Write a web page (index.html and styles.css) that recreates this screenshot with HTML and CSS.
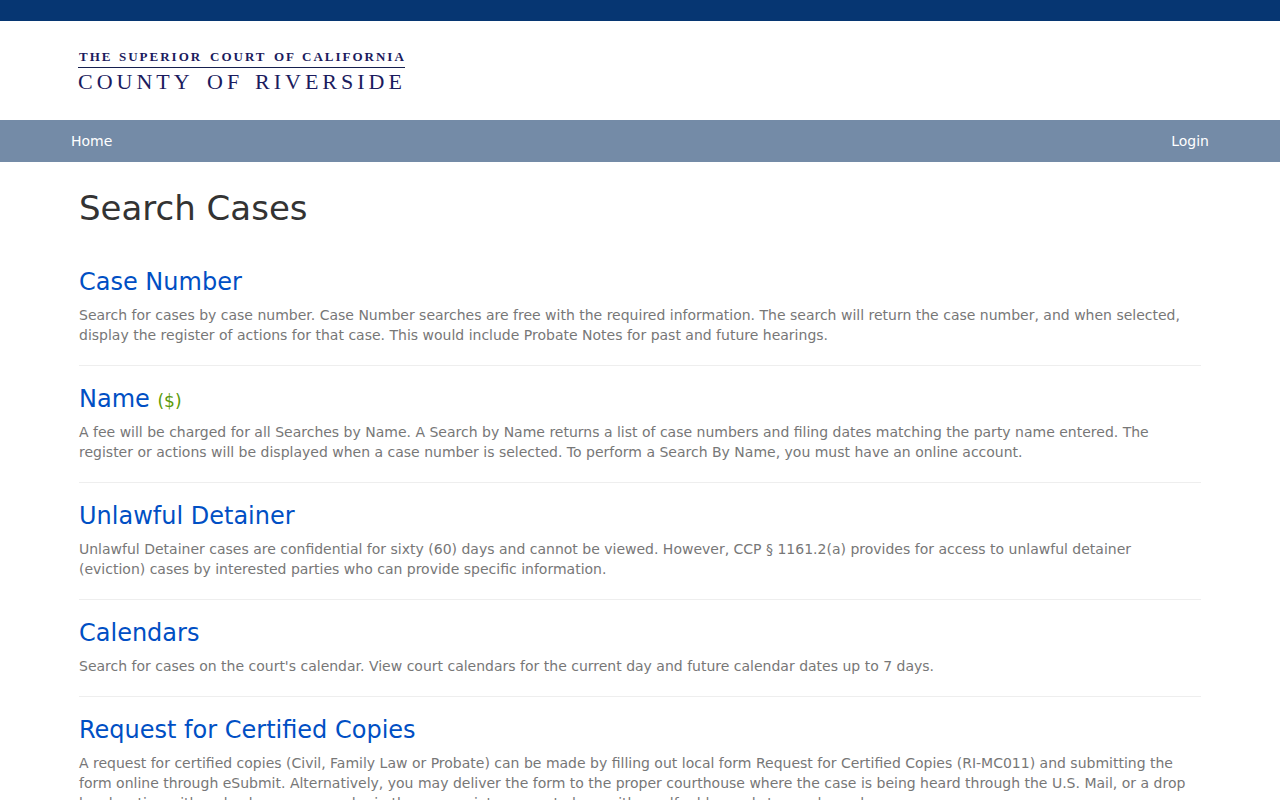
FILE: index.html
```html
<!DOCTYPE html>
<html lang="en">
<head>
    <meta charset="UTF-8">
    <title>Search Cases</title>
    <link rel="stylesheet" href="styles.css">
</head>
<body>
    <div class="topbar"></div>
    <header class="header">
        <a href="#" class="logo">
            <svg width="328" height="44" viewBox="0 0 328 44" role="img" aria-label="The Superior Court of California, County of Riverside">
                <g class="logo-small">
                    <text x="1" y="13">THE</text>
                    <text x="41" y="13">SUPERIOR</text>
                    <text x="132" y="13">COURT</text>
                    <text x="196" y="13">OF</text>
                    <text x="224" y="13">CALIFORNIA</text>
                </g>
                <rect class="logo-line" x="0" y="19" width="327" height="1"/>
                <g class="logo-big">
                    <text x="0" y="41">COUNTY</text>
                    <text x="129" y="41">OF</text>
                    <text x="177" y="41">RIVERSIDE</text>
                </g>
            </svg>
        </a>
    </header>
    <nav class="nav">
        <a href="#">Home</a>
        <a href="#">Login</a>
    </nav>
    <main class="content">
        <h1>Search Cases</h1>
        <section class="item">
            <h2><a href="#">Case Number</a></h2>
            <p>Search for cases by case number. Case Number searches are free with the required information. The search will return the case number, and when selected, display the register of actions for that case. This would include Probate Notes for past and future hearings.</p>
        </section>
        <section class="item">
            <h2><a href="#">Name</a> <span class="fee">($)</span></h2>
            <p>A fee will be charged for all Searches by Name. A Search by Name returns a list of case numbers and filing dates matching the party name entered. The register or actions will be displayed when a case number is selected. To perform a Search By Name, you must have an online account.</p>
        </section>
        <section class="item">
            <h2><a href="#">Unlawful Detainer</a></h2>
            <p>Unlawful Detainer cases are confidential for sixty (60) days and cannot be viewed. However, CCP § 1161.2(a) provides for access to unlawful detainer (eviction) cases by interested parties who can provide specific information.</p>
        </section>
        <section class="item">
            <h2><a href="#">Calendars</a></h2>
            <p>Search for cases on the court's calendar. View court calendars for the current day and future calendar dates up to 7 days.</p>
        </section>
        <section class="item">
            <h2><a href="#">Request for Certified Copies</a></h2>
            <p>A request for certified copies (Civil, Family Law or Probate) can be made by filling out local form Request for Certified Copies (RI-MC011) and submitting the form online through eSubmit. Alternatively, you may deliver the form to the proper courthouse where the case is being heard through the U.S. Mail, or a drop box location with a check or money order in the appropriate amount along with a self addressed stamped envelope.</p>
        </section>
    </main>
</body>
</html>
```

FILE: styles.css
```css
* {box-sizing: border-box;}
body {margin: 0;font: 14px/20px "DejaVu Sans", sans-serif;color: #777;background: #fff;}
h1, h2, p {margin: 0;font-weight: normal;}
a {text-decoration: none;}

.topbar {height: 21px;background: #063672;}
.header {padding: 27px 78px 28px;}
.logo {display: block;}
.logo svg {display: block;overflow: visible;}
.logo text {font-family: "Liberation Serif", serif;fill: #1b1b5e;}
.logo-small text {font-size: 13px;font-weight: bold;letter-spacing: 2px;}
.logo-big text {font-size: 22px;letter-spacing: 4px;}
.logo-line {fill: #16204f;}

.nav {display: flex;justify-content: space-between;padding: 11px 71px;background: #748ba7;}
.nav a {color: #fff;}

.content {padding: 26px 79px;}
.content h1 {margin-bottom: 41px;font-size: 34px;line-height: 40px;color: #333;}
.item {margin-bottom: 20px;padding-bottom: 20px;border-bottom: 1px solid #eee;}
.item h2 {margin-bottom: 10px;font-size: 24px;line-height: 26px;}
.item h2 a {color: #004fc4;}
.item .fee {font-size: 17px;line-height: 1;color: #5a9a08;}
```
